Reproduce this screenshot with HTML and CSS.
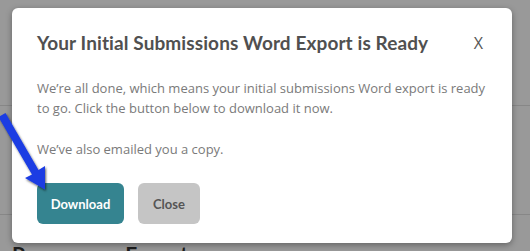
FILE: index.html
```html
<!DOCTYPE html>
<html>
<head>
<meta charset="utf-8">
<link rel="stylesheet" href="styles.css">
</head>
<body>
<div class="page">
  <div class="row row-a"></div>
  <div class="row row-b"></div>
  <h2 class="section-title">Programme Export</h2>
</div>
<div class="overlay"></div>
<div class="modal">
  <div class="modal-head">
    <h1 class="modal-title">Your Initial Submissions Word Export is Ready</h1>
    <span class="modal-close">X</span>
  </div>
  <p class="modal-text">We’re all done, which means your initial submissions Word export is ready to go. Click the button below to download it now.</p>
  <p class="modal-text second">We’ve also emailed you a copy.</p>
  <div class="modal-actions">
    <button class="btn btn-primary">Download</button>
    <button class="btn btn-grey">Close</button>
  </div>
</div>
<svg class="arrow" width="60" height="200" viewBox="0 0 60 200">
  <defs>
    <filter id="sh" x="-50%" y="-50%" width="200%" height="200%">
      <feDropShadow dx="1" dy="1.5" stdDeviation="1.2" flood-color="#000" flood-opacity="0.6"/>
    </filter>
  </defs>
  <polygon filter="url(#sh)" fill="#1b3de3" points="-1.5,117 32,174.5 25,178 45,189.5 45,166 38.5,170 5.5,113"/>
</svg>
</body>
</html>
```
FILE: styles.css
```css
html, body {
  margin: 0;
  padding: 0;
}
body {
  width: 530px;
  height: 251px;
  overflow: hidden;
  position: relative;
  background: #fff;
  font-family: "Open Sans", sans-serif;
}
.page {
  display: block;
}
.row {
  border-bottom: 1px solid #e2e2e2;
}
.row-a {
  height: 105px;
}
.row-b {
  height: 108px;
}
.section-title {
  margin: 0;
  padding: 27px 0 0 12px;
  font-family: "Lato", sans-serif;
  font-weight: 700;
  font-size: 21px;
  line-height: 24px;
  color: #333;
}
.overlay {
  position: absolute;
  inset: 0;
  background: rgba(0, 0, 0, 0.4);
}
.modal {
  position: absolute;
  left: 12px;
  top: 8px;
  width: 500px;
  height: 235px;
  box-sizing: border-box;
  background: #fff;
  border-radius: 6px;
  box-shadow: 0 2px 6px rgba(0, 0, 0, 0.35);
  padding: 22px 25px 0 25px;
}
.modal-head {
  display: flex;
  justify-content: space-between;
  align-items: center;
  height: 26px;
}
.modal-title {
  margin: 0;
  font-family: "Lato", sans-serif;
  font-weight: 700;
  font-size: 19px;
  letter-spacing: 0.1px;
  line-height: 26px;
  color: #505050;
}
.modal-close {
  font-family: "Open Sans", sans-serif;
  font-size: 16px;
  color: #555;
  margin-right: 4px;
}
.modal-text {
  margin: 22px 0 0 0;
  font-size: 13px;
  line-height: 20px;
  color: #7a7a7a;
}
.modal-text.second {
  margin-top: 21px;
}
.modal-actions {
  display: flex;
  gap: 14px;
  margin-top: 24px;
}
.btn {
  border: none;
  border-radius: 6px;
  height: 41px;
  font-family: "Lato", sans-serif;
  font-weight: 700;
  font-size: 13px;
  padding: 0;
}
.btn-primary {
  width: 87px;
  background: #358490;
  color: #fff;
}
.btn-grey {
  width: 62px;
  background: #c5c5c5;
  color: #555;
}
.arrow {
  position: absolute;
  left: 0;
  top: 0;
}
```
